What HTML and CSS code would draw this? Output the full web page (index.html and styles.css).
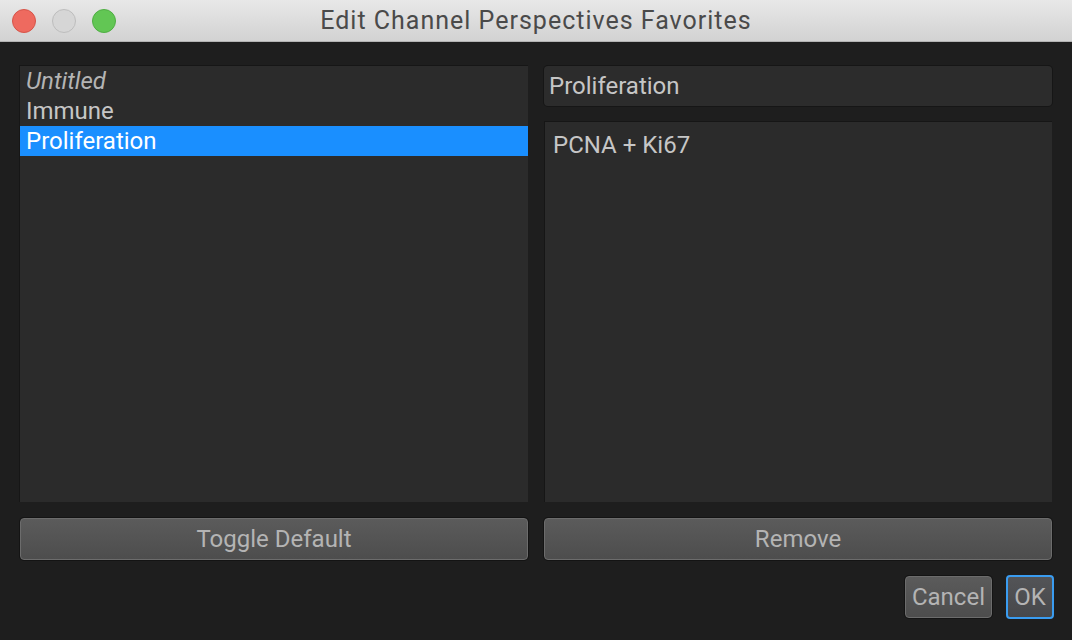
FILE: index.html
```html
<!DOCTYPE html>
<html lang="en">
<head>
    <meta charset="UTF-8">
    <title>Edit Channel Perspectives Favorites</title>
    <link rel="stylesheet" href="styles.css">
</head>
<body>
    <div class="titlebar">
        <div class="lights">
            <span class="light red"></span>
            <span class="light gray"></span>
            <span class="light green"></span>
        </div>
        <div class="title">Edit Channel Perspectives Favorites</div>
    </div>

    <div class="dialog">
        <div class="panes">
            <ul class="list">
                <li class="item untitled">Untitled</li>
                <li class="item">Immune</li>
                <li class="item selected">Proliferation</li>
            </ul>
            <div class="editor">
                <div class="name-input">Proliferation</div>
                <div class="text-area">PCNA + Ki67</div>
            </div>
            <button class="btn wide">Toggle Default</button>
            <button class="btn wide">Remove</button>
        </div>
        <div class="footer">
            <button class="btn small">Cancel</button>
            <button class="btn small ok">OK</button>
        </div>
    </div>
</body>
</html>
```

FILE: styles.css
```css
html, body {
    margin: 0;
    padding: 0;
    height: 100%;
}
body {
    background: #1e1e1e;
    font-family: Roboto, "Liberation Sans", Arial, sans-serif;
    overflow: hidden;
}
.titlebar {
    height: 41px;
    border-bottom: 1px solid #b3b3b3;
    background: linear-gradient(#e8e8e8, #d2d2d2);
    display: flex;
    align-items: center;
    position: relative;
}
.lights {
    display: flex;
    gap: 16px;
    padding-left: 12px;
}
.light {
    width: 24px;
    height: 24px;
    border-radius: 50%;
    box-sizing: border-box;
}
.red {
    background: #ee6a5f;
    border: 1px solid #d65449;
}
.gray {
    background: #d6d6d6;
    border: 1px solid #bdbdbd;
}
.green {
    background: #62c654;
    border: 1px solid #4fae43;
}
.title {
    position: absolute;
    left: 0;
    right: 0;
    top: 0;
    line-height: 41px;
    text-align: center;
    font-size: 25px;
    letter-spacing: 1px;
    color: #4a4a4a;
    pointer-events: none;
}
.dialog {
    padding: 23px 18px 0 20px;
}
.panes {
    display: grid;
    grid-template-columns: 508px 508px;
    grid-template-rows: 437px 42px;
    column-gap: 16px;
    row-gap: 16px;
}
.list {
    list-style: none;
    margin: 0;
    padding: 0;
    background: #2b2b2b;
    border-top: 1px solid #161616;
    border-left: 1px solid #161616;
    margin-left: -1px;
}
.item {
    height: 30px;
    line-height: 30px;
    padding-left: 6px;
    font-size: 24px;
    color: #c6c6c6;
}
.untitled {
    font-style: italic;
    color: #b4b4b4;
}
.selected {
    background: #1a8fff;
    color: #fff;
}
.editor {
    display: flex;
    flex-direction: column;
    gap: 15px;
    padding-top: 1px;
}
.name-input {
    height: 40px;
    line-height: 40px;
    background: #2c2c2c;
    border-radius: 4px;
    box-shadow: 0 0 0 1px #161616;
    padding-left: 5px;
    font-size: 24px;
    color: #c6c6c6;
}
.text-area {
    flex: 1;
    background: #2b2b2b;
    border-top: 1px solid #161616;
    border-left: 1px solid #161616;
    padding: 9px 8px;
    font-size: 24px;
    color: #c6c6c6;
}
.btn {
    font-family: inherit;
    font-size: 24px;
    color: #b4b4b4;
    background: linear-gradient(#5b5b5b, #4d4d4d);
    border: 1px solid #6c6c6c;
    border-radius: 4px;
    box-shadow: 0 0 0 1px #141414;
    padding: 0;
    cursor: pointer;
}
.btn.wide {
    height: 42px;
}
.footer {
    display: flex;
    justify-content: flex-end;
    gap: 14px;
    margin-top: 16px;
}
.btn.small {
    height: 42px;
    padding: 0 6px;
}
.btn.ok {
    height: 44px;
    margin-top: -1px;
    width: 48px;
    padding: 0;
    background: linear-gradient(#535457, #47484b);
    border: 2px solid #3a9cf0;
    box-shadow: none;
    color: #b4b4b4;
}
```
